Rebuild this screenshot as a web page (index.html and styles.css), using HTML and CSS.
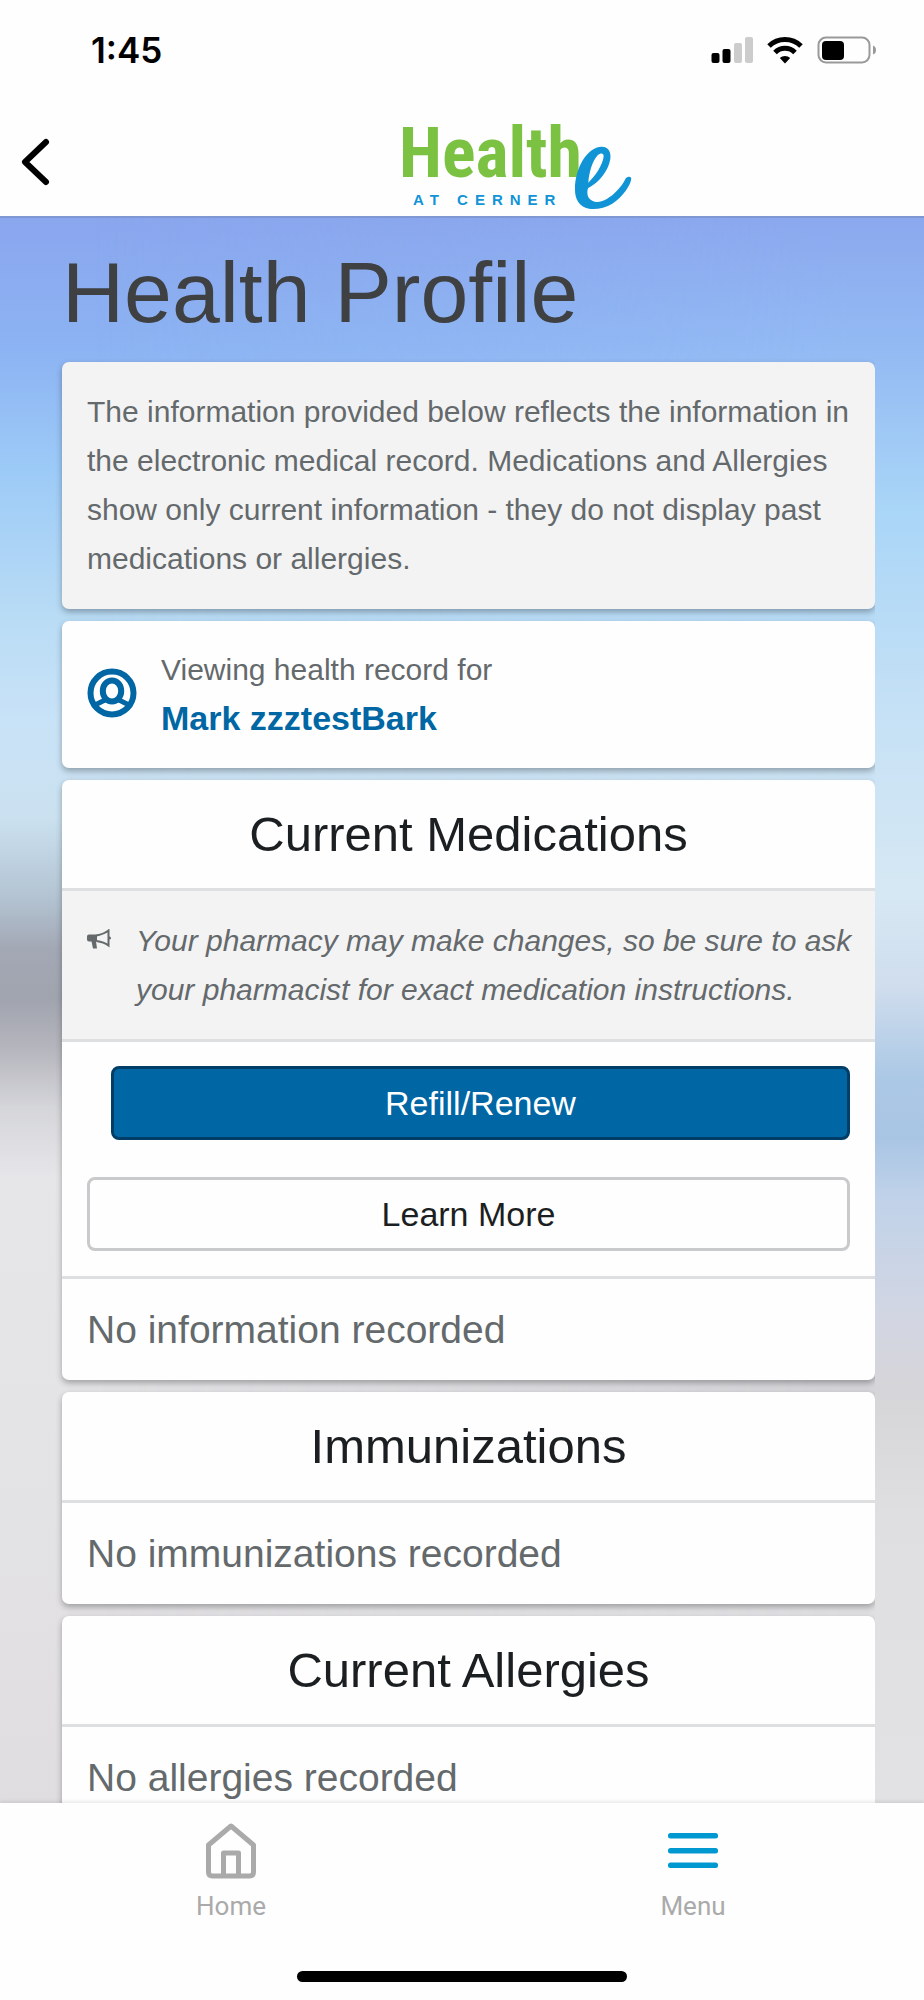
FILE: index.html
```html
<!DOCTYPE html>
<html lang="en">
<head>
<meta charset="utf-8">
<meta name="viewport" content="width=device-width, initial-scale=1">
<title>Health Profile</title>
<link rel="stylesheet" href="styles.css">
</head>
<body>
<div class="app">
  <div class="status">
    <span class="clock">1:45</span>
    <svg class="status-icons" width="166" height="30" viewBox="0 0 166 30" aria-hidden="true">
      <rect x="1.500" y="18" width="8" height="10" rx="2"/>
      <rect x="12.500" y="14" width="8" height="14" rx="2"/>
      <rect x="24" y="8" width="8" height="20" rx="2" fill="#ccc"/>
      <rect x="35" y="2" width="8" height="26" rx="2" fill="#ccc"/>
      <g fill="none" stroke="#000" stroke-width="5">
        <path d="M59 11a23 23 0 0 1 32 0"/>
        <path d="M65 17.500a14 14 0 0 1 20 0"/>
      </g>
      <path d="M75 28.500l-5.200-5.400a7.500 7.500 0 0 1 10.400 0z"/>
      <rect x="108.500" y="2.500" width="51" height="25" rx="7.500" fill="none" stroke="#999" stroke-width="2"/>
      <rect x="112" y="6" width="22" height="19" rx="4"/>
      <path d="M163 10.500q3 1 3 4.500t-3 4.500z" fill="#999"/>
    </svg>
  </div>
  <header class="topbar">
    <button class="back" type="button" aria-label="Back">
      <svg width="34" height="52" viewBox="0 0 34 52" aria-hidden="true"><path d="M28 6L7 26l21 20" fill="none" stroke="#000" stroke-width="6" stroke-linecap="round" stroke-linejoin="round"/></svg>
    </button>
    <svg class="logo" width="236" height="104" viewBox="0 0 236 104" role="img" aria-label="Health e at Cerner">
      <text class="logo-name" x="0" y="71">Health</text>
      <text class="logo-sub" x="14" y="99">AT CERNER</text>
      <path transform="translate(-20 -5) scale(.3333)" fill="#1094d6" fill-rule="evenodd" d="M588 265C588 200 625 138 668 137C690 137 697 155 694 175C688 210 660 245 627 262C620 285 632 303 655 303C690 300 725 262 738 236C742 228 752 224 757 232C757 250 730 290 700 308C680 321 650 326 630 323C600 318 588 295 588 265ZM628 245C650 225 672 190 674 166C674 155 664 156 656 163C640 180 630 215 628 245Z"/>
    </svg>
  </header>
  <main class="page">
    <h1>Health Profile</h1>
    <p class="card intro">The information provided below reflects the information in the electronic medical record. Medications and Allergies show only current information - they do not display past medications or allergies.</p>
    <section class="card person">
      <svg width="50" height="50" viewBox="0 0 50 50" aria-hidden="true" fill="none" stroke="#0066a4">
        <circle cx="25" cy="25" r="21.500" stroke-width="6"/>
        <ellipse cx="25" cy="23" rx="9.200" ry="10.500" stroke-width="6"/>
        <path d="M8 37Q12 35 18 32M32 32Q38 35 42 37" stroke-width="5"/>
      </svg>
      <div>
        <p>Viewing health record for</p>
        <a class="name" href="#person">Mark zzztestBark</a>
      </div>
    </section>
    <section class="card">
      <h2>Current Medications</h2>
      <div class="notice">
        <svg width="24" height="20" viewBox="0 0 24 20" aria-hidden="true" fill="#64696c">
          <path d="M2 5.500h8v7H9l1 7H6l-1.500-7H2q-2 0-2-2V7.500q0-2 2-2z"/>
          <path d="M9.500 6.500Q17 5 21.500 1.500v15Q17 13 9.500 12" fill="none" stroke="#64696c" stroke-width="2"/>
          <circle cx="22.500" cy="9" r="1.500"/>
        </svg>
        <p>Your pharmacy may make changes, so be sure to ask your pharmacist for exact medication instructions.</p>
      </div>
      <div class="actions">
        <button class="btn primary" type="button">Refill/Renew</button>
        <button class="btn" type="button">Learn More</button>
      </div>
      <p class="empty">No information recorded</p>
    </section>
    <section class="card">
      <h2>Immunizations</h2>
      <p class="empty">No immunizations recorded</p>
    </section>
    <section class="card">
      <h2>Current Allergies</h2>
      <p class="empty">No allergies recorded</p>
    </section>
  </main>
  <nav class="tabs">
    <a class="tab" href="#home">
      <svg width="56" height="60" viewBox="0 0 56 60" aria-hidden="true" fill="none" stroke="#aaa" stroke-width="5">
        <path d="M28 5L5.500 24v27q0 4 4 4h37q4 0 4-4V24z" stroke-linejoin="round"/>
        <path d="M20.500 55V32h15V55" stroke-linejoin="round"/>
      </svg>
      <span>Home</span>
    </a>
    <a class="tab" href="#menu">
      <svg width="56" height="60" viewBox="0 0 56 60" aria-hidden="true" fill="#0098d1">
        <rect x="3" y="12" width="50" height="5.500" rx="2.500"/>
        <rect x="3" y="27" width="50" height="5.500" rx="2.500"/>
        <rect x="3" y="41.500" width="50" height="5.500" rx="2.500"/>
      </svg>
      <span>Menu</span>
    </a>
    <div class="grip"></div>
  </nav>
</div>
</body>
</html>
```
FILE: styles.css
```css
* { box-sizing: border-box; margin: 0; }

body {
  font-family: "Liberation Sans", Arial, sans-serif;
  color: #64696c;
}

a { color: inherit; text-decoration: none; }

.app {
  display: flex;
  flex-direction: column;
  height: 100vh;
  background: #fefefe;
}

.status {
  display: flex;
  justify-content: space-between;
  align-items: center;
  height: 100px;
  padding: 0 48px 0 91px;
}

.clock {
  font: 600 35px/50px Inter, sans-serif;
  color: #000;
}

.topbar {
  display: flex;
  align-items: center;
  height: 118px;
  padding-left: 18px;
  border-bottom: 2px solid #7f97d2;
}

.back {
  display: flex;
  width: 92px;
  padding: 8px 0 0;
  border: 0;
  background: none;
}

.logo {
  margin: 0 auto;
  overflow: visible;
}

.logo-name {
  font: 700 70px "Roboto Condensed", Roboto, sans-serif;
  fill: #7cc242;
}

.logo-sub {
  font: bold 15px "Liberation Sans", sans-serif;
  letter-spacing: 7px;
  fill: #1094d6;
}

.page {
  position: relative;
  z-index: 0;
  flex: 1;
  min-height: 0;
  overflow: hidden;
  display: flex;
  flex-direction: column;
  gap: 12px;
  padding: 24px 49px 0 62px;
  background: linear-gradient(#8aa6ee 0, #8cb3f3 130px, #9ccaf7 250px, #b9dcf5 400px, #c8e2f7 500px, #cbe1f0 600px, #b3c3d2 680px, #a3a8b5 730px, #a0a4ae 780px, #b5b5bd 830px, #d5d6da 890px, #e6e6e9 960px, #e4e4e7 1200px, #e0dde0 1590px);
}

/* Right-hand tint of the blurred backdrop */
.page::before {
  content: "";
  position: absolute;
  inset: 0;
  z-index: -1;
  background: linear-gradient(#8ba8ee 0, #93baf3 130px, #a9d5f7 290px, #c6e1f5 500px, #d6e8f3 680px, #cfdded 770px, #abc8e5 860px, #a9c5e4 920px, #c0d2e9 980px, #d2d6e2 1100px, #d6d5d8 1180px, #dfdfe2 1300px, #e2e2e5 1590px);
  -webkit-mask-image: linear-gradient(to right, transparent 10%, #000 92%);
  mask-image: linear-gradient(to right, transparent 10%, #000 92%);
}

.page > * { flex: none; }

h1 {
  margin-bottom: 8px;
  font-size: 86px;
  line-height: 100px;
  font-weight: 400;
  color: #3f4042;
}

.card {
  border-radius: 7px;
  background: #fefefe;
  box-shadow: 0 3px 6px rgba(0, 0, 0, 0.3);
  clip-path: inset(-10px 0 -12px -10px);
}

.intro {
  padding: 25px 25px 26px;
  background: #f3f3f3;
  font-size: 30px;
  line-height: 49px;
}

.person {
  display: flex;
  align-items: center;
  gap: 24px;
  padding: 24px 25px;
  font-size: 30px;
  line-height: 49px;
}

.person svg { margin-bottom: 4px; }

.name {
  font-size: 34px;
  font-weight: 700;
  color: #0066a4;
}

h2 {
  padding: 25px;
  font-size: 49px;
  line-height: 58px;
  font-weight: 400;
  text-align: center;
  color: #1c1f21;
}

.notice {
  display: flex;
  gap: 25px;
  padding: 25px 12px 25px 25px;
  border-top: 3px solid #dedfe0;
  background: #f3f3f3;
  font-size: 30px;
  line-height: 49px;
  font-style: italic;
}

.notice svg { flex: none; margin-top: 13px; }

.actions {
  display: flex;
  flex-direction: column;
  gap: 37px;
  padding: 24px 25px 25px;
  border-top: 3px solid #dedfe0;
}

.btn {
  height: 74px;
  border: 3px solid #c8cacb;
  border-radius: 8px;
  background: #fefefe;
  color: #1c1f21;
  font: 34px/48px "Liberation Sans", Arial, sans-serif;
}

.primary {
  margin-left: 24px;
  border-color: #003e67;
  background: #0066a4;
  color: #fff;
}

.empty {
  padding: 26px 25px;
  border-top: 3px solid #dedfe0;
  font-size: 39px;
  line-height: 49px;
}

.tabs {
  position: relative;
  display: flex;
  height: 197px;
  padding-top: 18px;
  background: #fefefe;
  box-shadow: 0 -2px 3px rgba(0, 0, 0, 0.08);
}

.tab {
  flex: 1;
  display: flex;
  flex-direction: column;
  align-items: center;
  gap: 9px;
  font: 26px/32px Roboto, sans-serif;
  color: #aaa;
}

.grip {
  position: absolute;
  bottom: 18px;
  left: 50%;
  width: 330px;
  height: 11px;
  margin-left: -165px;
  border-radius: 6px;
  background: #000;
}
```
